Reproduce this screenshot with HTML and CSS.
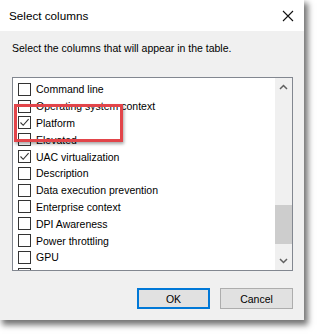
FILE: index.html
```html
<!DOCTYPE html>
<html>
<head>
<meta charset="utf-8">
<link rel="stylesheet" href="styles.css">
</head>
<body>
<div class="dialog">
  <div class="titlebar">
    <span class="title">Select columns</span>
    <svg class="close" width="12" height="12" viewBox="0 0 12 12"><path d="M1 1 L11 11 M11 1 L1 11" stroke="#111" stroke-width="1.1" fill="none"/></svg>
  </div>
  <div class="body">
    <p class="intro">Select the columns that will appear in the table.</p>
    <div class="list">
      <div class="items">
        <div class="row"><span class="cb"></span><span>Command line</span></div>
        <div class="row"><span class="cb"></span><span>Operating system context</span></div>
        <div class="row"><span class="cb checked"><svg width="11" height="11" viewBox="0 0 11 11"><path d="M1.5 5.5 L4.2 8.3 L9.6 2.2" stroke="#333" stroke-width="1.1" fill="none"/></svg></span><span>Platform</span></div>
        <div class="row"><span class="cb"></span><span>Elevated</span></div>
        <div class="row"><span class="cb checked"><svg width="11" height="11" viewBox="0 0 11 11"><path d="M1.5 5.5 L4.2 8.3 L9.6 2.2" stroke="#333" stroke-width="1.1" fill="none"/></svg></span><span>UAC virtualization</span></div>
        <div class="row"><span class="cb"></span><span>Description</span></div>
        <div class="row"><span class="cb"></span><span>Data execution prevention</span></div>
        <div class="row"><span class="cb"></span><span>Enterprise context</span></div>
        <div class="row"><span class="cb"></span><span>DPI Awareness</span></div>
        <div class="row"><span class="cb"></span><span>Power throttling</span></div>
        <div class="row"><span class="cb"></span><span>GPU</span></div>
        <div class="row"><span class="cb"></span></div>
      </div>
      <div class="scrollbar">
        <svg class="arrow" width="9" height="6" viewBox="0 0 9 6"><path d="M1 5 L4.5 1.5 L8 5" stroke="#606060" stroke-width="1.5" fill="none"/></svg>
        <div class="track"><div class="thumb"></div></div>
        <svg class="arrow" width="9" height="6" viewBox="0 0 9 6"><path d="M1 1 L4.5 4.5 L8 1" stroke="#606060" stroke-width="1.5" fill="none"/></svg>
      </div>
    </div>
    <div class="buttons">
      <div class="btn ok">OK</div>
      <div class="btn">Cancel</div>
    </div>
  </div>
  <div class="highlight"></div>
</div>
</body>
</html>
```
FILE: styles.css
```css
html, body {
  margin: 0;
  padding: 0;
  background: #ffffff;
}
body {
  width: 320px;
  height: 336px;
  overflow: hidden;
  font-family: "Liberation Sans", Arial, sans-serif;
  font-size: 10.5px;
  color: #000;
}
.dialog {
  position: relative;
  width: 304px;
  height: 320px;
  display: flex;
  flex-direction: column;
  box-shadow: 3px 4px 6px 1px rgba(0,0,0,0.55);
}
.titlebar {
  height: 31px;
  background: #ffffff;
  display: flex;
  align-items: center;
  justify-content: space-between;
  padding: 0 10px 0 9px;
  flex-shrink: 0;
}
.title {
  font-size: 11.7px;
  color: #000;
}
.body {
  flex: 1;
  background: #f0f0f0;
  padding: 9px 11px 0 12px;
  display: flex;
  flex-direction: column;
}
.intro {
  margin: 0;
  height: 17px;
  line-height: 17px;
  font-size: 10.5px;
}
.list {
  margin-top: 20px;
  height: 192px;
  border: 1px solid #828790;
  background: #fff;
  display: flex;
  overflow: hidden;
}
.items {
  flex: 1;
  padding: 3px 0 0 5px;
  overflow: hidden;
}
.row {
  height: 16.8px;
  display: flex;
  align-items: center;
  gap: 5px;
  white-space: nowrap;
  line-height: 16px;
}
.cb {
  width: 11px;
  height: 11px;
  border: 1px solid #333;
  background: #fff;
  flex-shrink: 0;
  display: flex;
}
.scrollbar {
  width: 17px;
  background: #f0f0f0;
  display: flex;
  flex-direction: column;
  align-items: center;
  flex-shrink: 0;
}
.arrow {
  margin: 6px 0;
}
.track {
  flex: 1;
  width: 17px;
  display: flex;
  flex-direction: column;
  justify-content: flex-end;
  padding-bottom: 8px;
}
.thumb {
  width: 17px;
  height: 39px;
  background: #cdcdcd;
}
.buttons {
  display: flex;
  justify-content: flex-end;
  gap: 10px;
  margin-top: 17px;
}
.btn {
  width: 71px;
  height: 19px;
  border: 1px solid #adadad;
  background: #e1e1e1;
  display: flex;
  align-items: center;
  justify-content: center;
  font-size: 10.5px;
}
.btn.ok {
  border: 2px solid #0078d7;
  width: 69px;
  height: 17px;
}
.highlight {
  position: absolute;
  left: 14px;
  top: 104px;
  width: 103px;
  height: 32px;
  border: 3px solid #e2454a;
  box-shadow: 1px 2px 3px rgba(0,0,0,0.35);
}
```
